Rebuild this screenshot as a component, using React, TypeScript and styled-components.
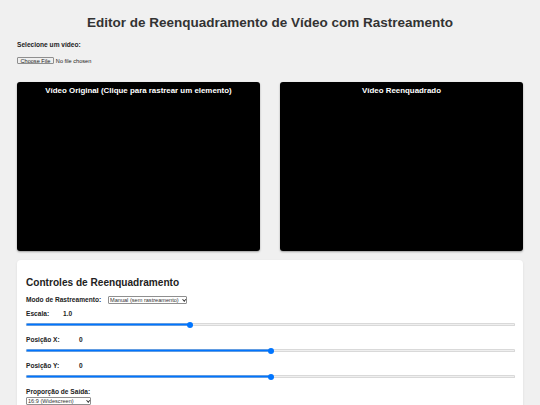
import { useState } from "react";
import styled, { createGlobalStyle } from "styled-components";

const GlobalStyle = createGlobalStyle`
  body {
    margin: 0;
    background: #f0f0f0;
    font-family: "Liberation Sans", Arial, sans-serif;
    color: #333;
  }
`;

const Page = styled.div`
  padding: 15px 17px 0;
`;

const Title = styled.h1`
  margin: 0 0 10px;
  font-size: 13.5px;
  line-height: 16px;
  font-weight: bold;
  text-align: center;
  color: #333;
`;

const UploadBlock = styled.div`
  display: flex;
  flex-direction: column;
  gap: 8px;
  margin-bottom: 18px;
`;

const FieldLabel = styled.label<{ $width?: number }>`
  display: inline-block;
  min-width: ${(p) => (p.$width ? `${p.$width}px` : "0")};
  font-size: 6.6px;
  line-height: 8px;
  font-weight: bold;
  color: #222;
`;

const FileInput = styled.input`
  font-family: "Liberation Sans", Arial, sans-serif;
  font-size: 5.6px;
  height: 7px;
  color: #222;

  &::file-selector-button {
    font-family: inherit;
    font-size: 5.6px;
    height: 7px;
    padding: 0 2.5px;
    margin-right: 2px;
    border: 0.5px solid #8f8f8f;
    border-radius: 1px;
    background: #efefef;
    color: #222;
  }
`;

const VideoGrid = styled.div`
  display: grid;
  grid-template-columns: 1fr 1fr;
  gap: 20px;
  margin-bottom: 9px;
`;

const VideoBox = styled.div`
  height: 169px;
  background: #000;
  border-radius: 3px;
  box-shadow: 0 1px 2px rgba(0, 0, 0, 0.35);
  padding-top: 4px;
  box-sizing: border-box;
`;

const VideoTitle = styled.h3`
  margin: 0;
  font-size: 7.9px;
  line-height: 9px;
  font-weight: bold;
  text-align: center;
  color: #fff;
`;

const ControlsPanel = styled.section`
  background: #fff;
  border-radius: 4px;
  box-shadow: 0 1px 3px rgba(0, 0, 0, 0.08);
  padding: 17px 8px 10px 9px;
`;

const ControlsTitle = styled.h2`
  margin: 0 0 7px;
  font-size: 10.1px;
  line-height: 12px;
  font-weight: bold;
  color: #222;
`;

const Group = styled.div<{ $after?: number }>`
  display: flex;
  flex-direction: column;
  align-items: flex-start;
  gap: ${(p) => (p.$after === undefined ? 3.5 : 1)}px;
  margin-bottom: ${(p) => p.$after ?? 8.5}px;
`;

const Row = styled.div`
  display: flex;
  align-items: center;
  height: 8px;
`;

const Value = styled.span`
  font-size: 6.6px;
  line-height: 8px;
  font-weight: bold;
  color: #222;
`;

const SelectWrap = styled.div<{ $width: number }>`
  position: relative;
  display: flex;
  flex: none;
  width: ${(p) => p.$width}px;
  height: 8px;

  &::after {
    content: "";
    position: absolute;
    right: 2px;
    top: 2.2px;
    width: 1.5px;
    height: 1.5px;
    border-right: 0.7px solid #333;
    border-bottom: 0.7px solid #333;
    transform: rotate(45deg);
    pointer-events: none;
  }
`;

const Select = styled.select`
  -webkit-appearance: none;
  appearance: none;
  display: block;
  box-sizing: border-box;
  width: 100%;
  height: 8px;
  min-height: 0;
  margin: 0;
  padding: 0 5px 0 1px;
  font-family: "Liberation Sans", Arial, sans-serif;
  font-size: 5.6px;
  line-height: 7px;
  color: #333;
  background: #fff;
  border: 0.5px solid #8f8f8f;
  border-radius: 1px;
`;

const Slider = styled.input`
  -webkit-appearance: none;
  appearance: none;
  display: block;
  width: 100%;
  height: 6px;
  margin: 0;
  background: transparent;

  &::-webkit-slider-runnable-track {
    height: 2.5px;
    border-radius: 2px;
    background: linear-gradient(
      to right,
      #0075ff var(--fill),
      #efefef var(--fill)
    );
    box-shadow: inset 0 0 0 0.5px #c4c4c4;
  }

  &::-webkit-slider-thumb {
    -webkit-appearance: none;
    width: 6px;
    height: 6px;
    margin-top: -1.75px;
    border-radius: 50%;
    background: #0075ff;
    border: none;
  }
`;

type RangeProps = {
  min: number;
  max: number;
  step: number;
  value: number;
  onChange: (v: number) => void;
};

const Range = ({ min, max, step, value, onChange }: RangeProps) => {
  const pct = ((value - min) / (max - min)) * 100;
  return (
    <Slider
      type="range"
      min={min}
      max={max}
      step={step}
      value={value}
      onChange={(e) => onChange(Number(e.target.value))}
      style={{ ["--fill" as string]: `calc(3px + ${pct / 100} * (100% - 6px))` }}
    />
  );
};

export default function App() {
  const [scale, setScale] = useState(1);
  const [posX, setPosX] = useState(0);
  const [posY, setPosY] = useState(0);

  return (
    <>
      <GlobalStyle />
      <Page>
        <Title>Editor de Reenquadramento de Vídeo com Rastreamento</Title>

        <UploadBlock>
          <FieldLabel htmlFor="videoInput">Selecione um vídeo:</FieldLabel>
          <FileInput id="videoInput" type="file" accept="video/*" />
        </UploadBlock>

        <VideoGrid>
          <VideoBox>
            <VideoTitle>Vídeo Original (Clique para rastrear um elemento)</VideoTitle>
          </VideoBox>
          <VideoBox>
            <VideoTitle>Vídeo Reenquadrado</VideoTitle>
          </VideoBox>
        </VideoGrid>

        <ControlsPanel>
          <ControlsTitle>Controles de Reenquadramento</ControlsTitle>

          <Group $after={6}>
            <Row>
              <FieldLabel $width={82}>Modo de Rastreamento:</FieldLabel>
              <SelectWrap $width={79}>
                <Select defaultValue="manual">
                  <option value="manual">Manual (sem rastreamento)</option>
                  <option value="object">Rastreamento de objeto</option>
                  <option value="face">Rastreamento facial</option>
                </Select>
              </SelectWrap>
            </Row>
          </Group>

          <Group>
            <Row>
              <FieldLabel $width={37}>Escala:</FieldLabel>
              <Value>{scale.toFixed(1)}</Value>
            </Row>
            <Range min={0.5} max={2} step={0.1} value={scale} onChange={setScale} />
          </Group>

          <Group>
            <Row>
              <FieldLabel $width={53}>Posição X:</FieldLabel>
              <Value>{posX}</Value>
            </Row>
            <Range min={-100} max={100} step={1} value={posX} onChange={setPosX} />
          </Group>

          <Group>
            <Row>
              <FieldLabel $width={53}>Posição Y:</FieldLabel>
              <Value>{posY}</Value>
            </Row>
            <Range min={-100} max={100} step={1} value={posY} onChange={setPosY} />
          </Group>

          <Group $after={0}>
            <Row>
              <FieldLabel>Proporção de Saída:</FieldLabel>
            </Row>
            <SelectWrap $width={65}>
              <Select defaultValue="16:9">
                <option value="16:9">16:9 (Widescreen)</option>
                <option value="9:16">9:16 (Vertical)</option>
                <option value="1:1">1:1 (Quadrado)</option>
                <option value="4:3">4:3 (Padrão)</option>
              </Select>
            </SelectWrap>
          </Group>
        </ControlsPanel>
      </Page>
    </>
  );
}
